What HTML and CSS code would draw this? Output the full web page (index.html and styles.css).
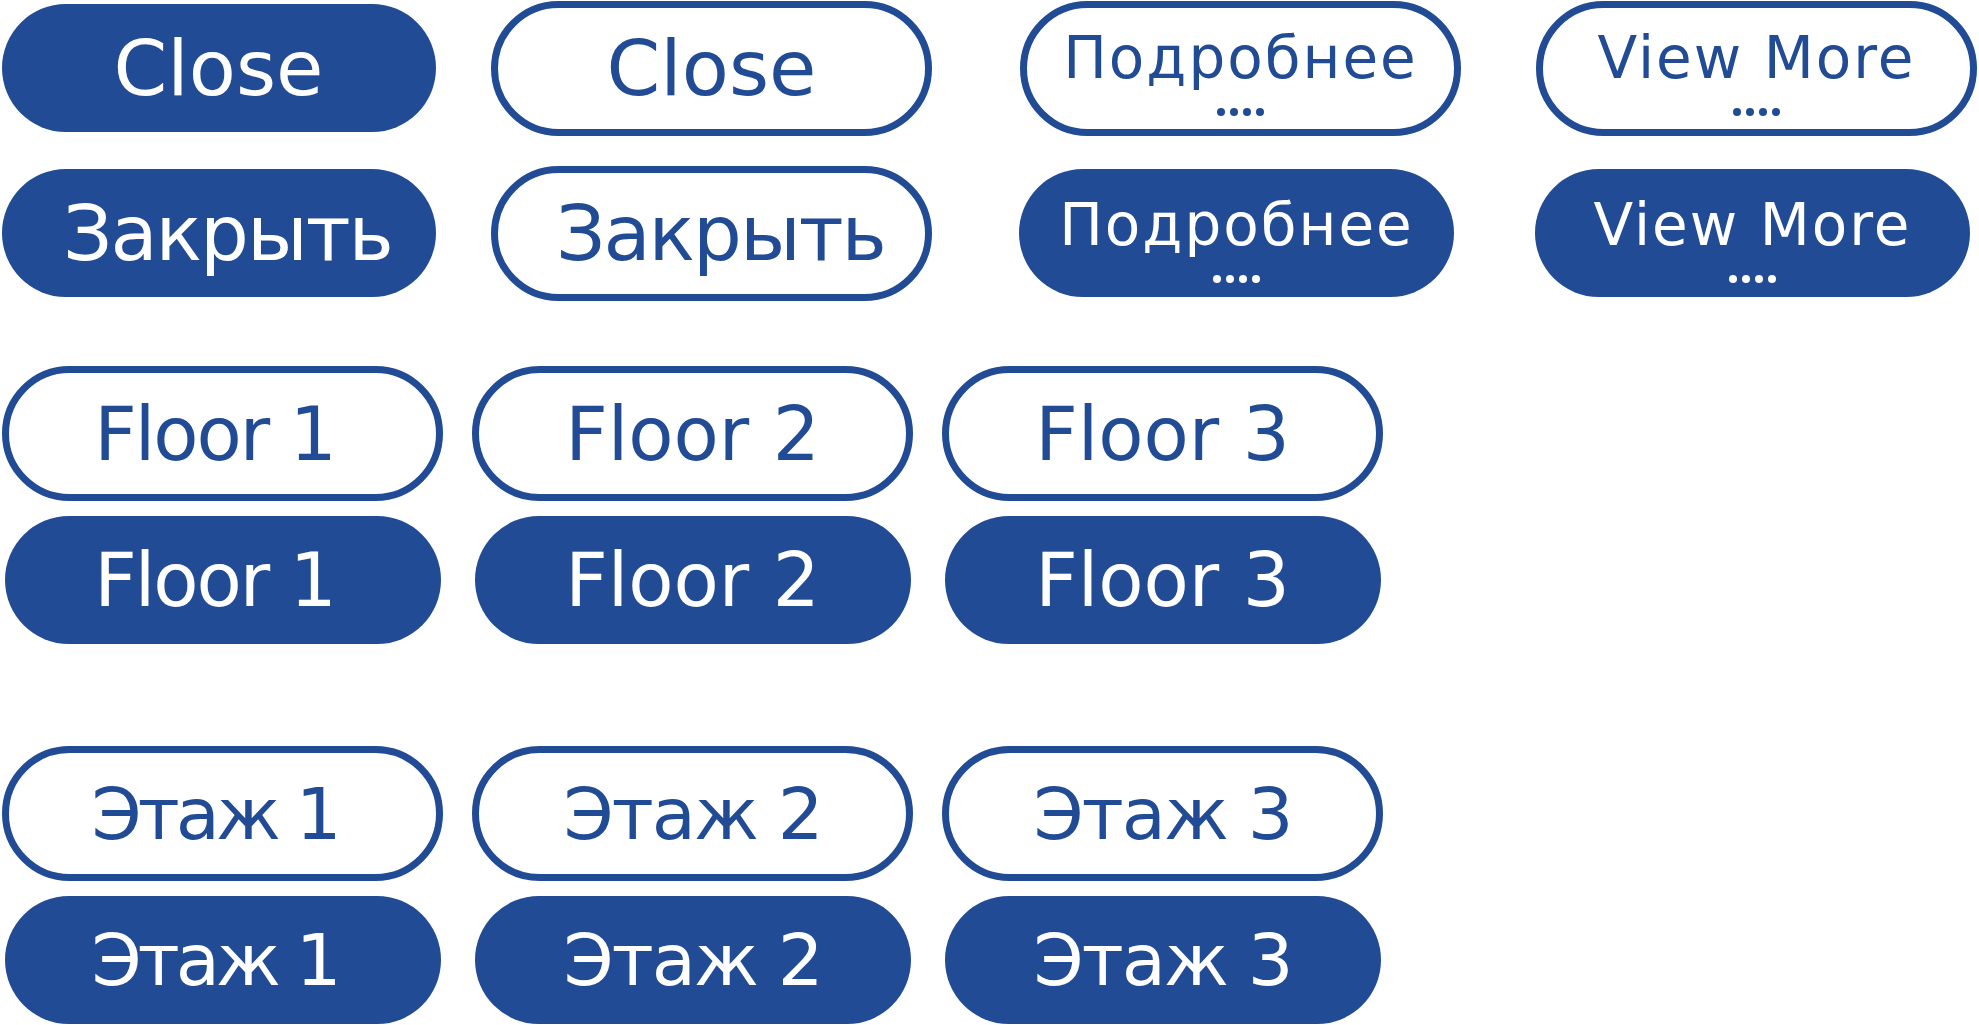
FILE: index.html
```html
<!DOCTYPE html>
<html lang="ru">
<head>
<meta charset="utf-8">
<title>Buttons</title>
<link rel="stylesheet" href="styles.css">
</head>
<body>
<main class="page">
  <section class="top">
    <div class="col col-1">
      <div class="cell"><div class="btn fill lg w434">Close</div></div>
      <div class="cell"><div class="btn fill lg w434 ru shift-r">Закрыть</div></div>
    </div>
    <div class="col col-2">
      <div class="cell"><div class="btn outline lg">Close</div></div>
      <div class="cell"><div class="btn outline lg ru shift-r">Закрыть</div></div>
    </div>
    <div class="col col-3 start">
      <div class="cell"><div class="btn outline sm more"><span class="label">Подробнее</span><span class="dots"><i></i><i></i><i></i><i></i></span></div></div>
      <div class="cell"><div class="btn fill sm more w435"><span class="label">Подробнее</span><span class="dots"><i></i><i></i><i></i><i></i></span></div></div>
    </div>
    <div class="col col-4 start">
      <div class="cell"><div class="btn outline sm more"><span class="label">View More</span><span class="dots"><i></i><i></i><i></i><i></i></span></div></div>
      <div class="cell"><div class="btn fill sm more w435"><span class="label">View More</span><span class="dots"><i></i><i></i><i></i><i></i></span></div></div>
    </div>
  </section>

  <section class="floors">
    <div class="row">
      <div class="slot"><div class="btn outline md one">Floor 1</div></div>
      <div class="slot"><div class="btn outline md">Floor 2</div></div>
      <div class="slot"><div class="btn outline md">Floor 3</div></div>
    </div>
    <div class="row">
      <div class="slot"><div class="btn fill md w436 one">Floor 1</div></div>
      <div class="slot"><div class="btn fill md w436">Floor 2</div></div>
      <div class="slot"><div class="btn fill md w436">Floor 3</div></div>
    </div>
  </section>

  <section class="floors floors-ru">
    <div class="row">
      <div class="slot"><div class="btn outline md etazh one">Этаж 1</div></div>
      <div class="slot"><div class="btn outline md etazh">Этаж 2</div></div>
      <div class="slot"><div class="btn outline md etazh">Этаж 3</div></div>
    </div>
    <div class="row">
      <div class="slot"><div class="btn fill md w436 etazh one">Этаж 1</div></div>
      <div class="slot"><div class="btn fill md w436 etazh">Этаж 2</div></div>
      <div class="slot"><div class="btn fill md w436 etazh">Этаж 3</div></div>
    </div>
  </section>
</main>
</body>
</html>
```

FILE: styles.css
```css
html, body {
  margin: 0;
  padding: 0;
  background: #ffffff;
  overflow: hidden;
}

.page {
  width: 1979px;
  height: 1025px;
  font-family: "DejaVu Sans", "Noto Sans", sans-serif;
  color: #214b94;
}

/* ---------- top block ---------- */
.top {
  display: flex;
  padding-top: 1px;
}

.col {
  display: flex;
  flex-direction: column;
  gap: 31px;
}

.col-1 { width: 436px; padding-left: 1px; box-sizing: border-box; }
.col-2 { width: 441px; margin-left: 55px; }
.col-3 { width: 442px; margin-left: 88px; }
.col-4 { width: 443px; margin-left: 74px; }

.cell {
  height: 134px;
  display: flex;
  align-items: center;
}

.col-1 .cell,
.col-2 .cell { justify-content: center; }

.start .cell { justify-content: flex-start; }

/* ---------- buttons ---------- */
.btn {
  box-sizing: border-box;
  display: flex;
  flex-direction: column;
  align-items: center;
  justify-content: center;
  line-height: 1;
  white-space: nowrap;
  flex: none;
}

.outline {
  width: 441px;
  height: 135px;
  border: 7px solid #214b94;
  border-radius: 68px;
  background: #ffffff;
  color: #214b94;
}

.fill {
  height: 128px;
  border-radius: 64px;
  background: #214b94;
  color: #ffffff;
}

.w434 { width: 434px; }
.w435 { width: 435px; margin-left: -1px; }
.w436 { width: 436px; }

.lg { font-size: 77px; }
.md { font-size: 74px; }
.sm { font-size: 58px; letter-spacing: 2px; }

.ru { letter-spacing: -2px; }
.etazh { font-size: 72px; letter-spacing: -2px; }

.shift-r { padding-left: 18px; }

/* labels ending with "1": the narrow digit sits left of centre */
.one { letter-spacing: -2px; padding-right: 16px; }
.etazh.one { letter-spacing: -4px; }

.more { justify-content: flex-start; }
.outline.more { padding-top: 21px; }
.fill.more { padding-top: 27px; }

.label { display: block; }

.dots {
  display: flex;
  gap: 5px;
  margin-top: 21px;
}

.dots i {
  display: block;
  width: 8px;
  height: 8px;
  border-radius: 50%;
  background: currentColor;
}

/* ---------- floors ---------- */
.floors {
  display: flex;
  flex-direction: column;
  gap: 15px;
  margin-top: 66px;
  padding-left: 2px;
}

.floors-ru { margin-top: 102px; }

.row {
  display: flex;
  gap: 29px;
}

.slot {
  width: 441px;
  display: flex;
  justify-content: center;
}
```
